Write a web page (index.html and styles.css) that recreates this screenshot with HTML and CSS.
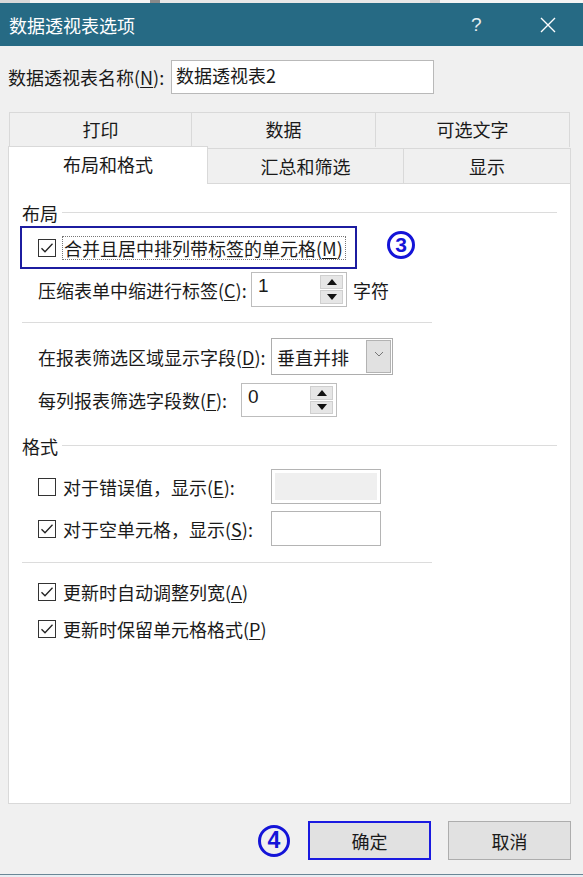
FILE: index.html
```html
<!DOCTYPE html>
<html lang="zh-CN">
<head>
<meta charset="utf-8">
<title>数据透视表选项</title>
<link rel="stylesheet" href="styles.css">
</head>
<body>
<div class="page">
  <div class="topstrip"></div>
  <div class="titlebar">
    <span class="title">数据透视表选项</span>
    <span class="help">?</span>
    <svg class="close" width="16" height="16" viewBox="0 0 16 16"><path d="M1 1L15 15M15 1L1 15" stroke="#fff" stroke-width="1.4" fill="none"/></svg>
  </div>

  <div class="namerow">
    <span class="lbl">数据透视表名称(<u>N</u>):</span>
    <div class="namebox">数据透视表2</div>
  </div>

  <div class="tabs">
    <div class="tabrow row1">
      <div class="tab t-print">打印</div>
      <div class="tab t-data">数据</div>
      <div class="tab t-alt">可选文字</div>
    </div>
    <div class="tabrow row2">
      <div class="tab t-layout active">布局和格式</div>
      <div class="tab t-sum">汇总和筛选</div>
      <div class="tab t-show">显示</div>
    </div>
  </div>

  <div class="panel">
    <div class="group"><span>布局</span><i></i></div>

    <div class="hlrow">
      <div class="hlbox">
        <span class="cb checked"><svg width="16" height="16" viewBox="0 0 16 16"><path d="M2.5 8.2L6 11.8L13.5 3.8" stroke="#222" stroke-width="1.3" fill="none"/></svg></span>
        <span class="focus">合并且居中排列带标签的单元格(<u>M</u>)</span>
      </div>
      <span class="circ c3">3</span>
    </div>

    <div class="row r-indent">
      <span class="lbl">压缩表单中缩进行标签(<u>C</u>):</span>
      <div class="spin s1"><span class="val">1</span>
        <div class="arrows"><b class="up"></b><b class="down"></b></div>
      </div>
      <span class="lbl unit">字符</span>
    </div>

    <div class="sep"></div>

    <div class="row r-dd">
      <span class="lbl">在报表筛选区域显示字段(<u>D</u>):</span>
      <div class="dd"><span class="val">垂直并排</span>
        <span class="ddbtn"><svg width="10" height="6" viewBox="0 0 10 6"><path d="M1 1L5 5L9 1" stroke="#777" stroke-width="1" fill="none"/></svg></span>
      </div>
    </div>

    <div class="row r-cnt">
      <span class="lbl">每列报表筛选字段数(<u>F</u>):</span>
      <div class="spin s2"><span class="val">0</span>
        <div class="arrows"><b class="up"></b><b class="down"></b></div>
      </div>
    </div>

    <div class="group g2"><span>格式</span><i></i></div>

    <div class="row r-err">
      <span class="cb"></span>
      <span class="lbl ltxt">对于错误值，显示(<u>E</u>):</span>
      <div class="fbox disabled"><div class="inner"></div></div>
    </div>

    <div class="row r-empty">
      <span class="cb checked"><svg width="16" height="16" viewBox="0 0 16 16"><path d="M2.5 8.2L6 11.8L13.5 3.8" stroke="#222" stroke-width="1.3" fill="none"/></svg></span>
      <span class="lbl ltxt">对于空单元格，显示(<u>S</u>):</span>
      <div class="fbox"></div>
    </div>

    <div class="sep sep2"></div>

    <div class="row r-chk1">
      <span class="cb checked"><svg width="16" height="16" viewBox="0 0 16 16"><path d="M2.5 8.2L6 11.8L13.5 3.8" stroke="#222" stroke-width="1.3" fill="none"/></svg></span>
      <span class="lbl ltxt">更新时自动调整列宽(<u>A</u>)</span>
    </div>

    <div class="row r-chk2">
      <span class="cb checked"><svg width="16" height="16" viewBox="0 0 16 16"><path d="M2.5 8.2L6 11.8L13.5 3.8" stroke="#222" stroke-width="1.3" fill="none"/></svg></span>
      <span class="lbl ltxt">更新时保留单元格格式(<u>P</u>)</span>
    </div>
  </div>

  <div class="buttons">
    <span class="circ c4">4</span>
    <div class="btn ok">确定</div>
    <div class="btn cancel">取消</div>
  </div>

  <div class="bottomstrip"></div>
</div>
</body>
</html>
```

FILE: styles.css
```css
* { box-sizing: border-box; }
html, body { margin: 0; padding: 0; }
body {
  background: #f0f0f0;
  font-family: "Noto Sans CJK SC", "Noto Sans", sans-serif;
  font-size: 18px;
  color: #1a1a1a;
}
u { text-decoration: underline; text-underline-offset: 2px; text-decoration-thickness: 1px; }

.page {
  width: 583px;
  height: 877px;
  display: flex;
  flex-direction: column;
  overflow: hidden;
}

.topstrip {
  height: 3px;
  background: linear-gradient(90deg, #d8d8d8 0 30px, #f4f4f4 30px 150px, #8a8a8a 150px 160px, #e8e8e8 160px 430px, #cfcfcf 430px 440px, #f4f4f4 440px);
}

.titlebar {
  height: 43px;
  background: #266a84;
  display: flex;
  align-items: center;
  color: #fff;
  padding-left: 9px;
}
.title { font-size: 18px; line-height: 24px; flex: 1; }
.help { font-family: "Liberation Sans", sans-serif; font-size: 19px; width: 14px; margin-right: 55px; color: #e8eef1; }
.close { margin-right: 27px; }

.namerow {
  margin-top: 14px;
  height: 34px;
  display: flex;
  align-items: center;
  padding-left: 8px;
}
.lbl { line-height: 24px; white-space: nowrap; }
.namerow .lbl { width: 163px; }
.namebox {
  width: 263px;
  height: 34px;
  background: #fff;
  border: 1px solid #b9b9b9;
  padding-left: 4px;
  line-height: 28px;
}

.tabs { margin-top: 18px; margin-left: 8px; width: 563px; }
.tabrow { display: flex; }
.row1 { height: 35px; padding-left: 1px; padding-right: 1px; }
.row2 { height: 36px; align-items: flex-end; }
.tab {
  background: #f0f0f0;
  border: 1px solid #d9d9d9;
  border-bottom: none;
  display: flex;
  align-items: center;
  justify-content: center;
  line-height: 24px;
}
.row1 .tab { height: 35px; padding-bottom: 2px; }
.row1 .tab + .tab { border-left: none; }
.t-print { width: 183px; }
.t-data { width: 184px; }
.t-alt { width: 194px; }
.row2 .tab { height: 35px; border-top-color: #d9d9d9; }
.t-layout { width: 200px; }
.t-sum { width: 196px; border-left: none; }
.t-show { width: 167px; border-left: none; }
.tab.active {
  background: #fff;
  height: 38px;
  border-color: #d9d9d9;
  position: relative;
  z-index: 1;
  margin-bottom: -1px;
  padding-bottom: 3px;
}

.panel {
  margin-left: 8px;
  width: 563px;
  height: 621px;
  background: #fff;
  border: 1px solid #d9d9d9;
  display: flex;
  flex-direction: column;
  padding-left: 13px;
  padding-top: 17px;
}

.group {
  display: flex;
  align-items: center;
  height: 24px;
  width: 535px;
}
.group span { line-height: 24px; }
.group i { flex: 1; height: 1px; background: #dcdcdc; margin-left: 4px; margin-top: -2px; }
.g2 { margin-top: 17px; }

.hlrow { display: flex; align-items: center; margin-top: 1px; margin-left: -2px; }
.hlbox {
  width: 337px;
  height: 43px;
  border: 2px solid #1c1ca0;
  display: flex;
  align-items: center;
  padding-left: 16px;
}
.focus {
  border: 1px dotted #777;
  line-height: 22px;
  padding: 0 2px 0 1px;
  margin-left: 6px;
}

.cb {
  width: 18px;
  height: 18px;
  border: 1px solid #333;
  background: #fff;
  display: inline-flex;
  align-items: center;
  justify-content: center;
  flex: none;
}

.circ {
  display: inline-flex;
  align-items: center;
  justify-content: center;
  border: 3px solid #1414d8;
  border-radius: 50%;
  color: #1414d8;
  font-family: "Liberation Sans", sans-serif;
  font-weight: bold;
}
.c3 { width: 28px; height: 28px; font-size: 21px; margin-left: 30px; margin-top: -6px; }
.c4 { width: 32px; height: 32px; font-size: 23px; margin-right: 18px; }

.row { display: flex; align-items: center; padding-left: 16px; }
.r-indent { height: 35px; margin-top: 3px; }
.r-indent .lbl { width: 213px; }
.spin {
  height: 35px;
  width: 96px;
  border: 1px solid #bdbdbd;
  background: #fff;
  display: flex;
  justify-content: space-between;
  padding: 2px 3px 2px 6px;
}
.spin .val { font-family: "Liberation Sans", sans-serif; font-size: 19px; line-height: 22px; }
.arrows { display: flex; flex-direction: column; width: 23px; gap: 1px; }
.arrows b {
  flex: 1;
  background: #e6e6e6;
  border: 1px solid #cfcfcf;
  position: relative;
}
.arrows b::after {
  content: "";
  position: absolute;
  left: 50%;
  top: 50%;
  transform: translate(-50%, -50%);
  border-left: 5px solid transparent;
  border-right: 5px solid transparent;
}
.arrows .up::after { border-bottom: 6px solid #111; }
.arrows .down::after { border-top: 6px solid #111; }
.unit { margin-left: 6px; }

.sep { height: 1px; width: 410px; background: #dcdcdc; margin-top: 15px; }
.sep2 { margin-top: 16px; }

.r-dd { height: 37px; margin-top: 15px; }
.r-dd .lbl { width: 233px; }
.dd {
  width: 122px;
  height: 37px;
  border: 1px solid #adadad;
  background: #fff;
  display: flex;
  justify-content: space-between;
  padding: 1px 1px 1px 5px;
}
.dd .val { line-height: 34px; }
.ddbtn {
  width: 25px;
  background: #e1e1e1;
  border: 1px solid #b3b3b3;
  display: flex;
  align-items: center;
  justify-content: center;
  padding-bottom: 6px;
}

.r-cnt { height: 34px; margin-top: 8px; }
.r-cnt .lbl { width: 203px; }
.s2 { height: 34px; }

.ltxt { margin-left: 7px; }
.r-err { height: 35px; margin-top: 11px; }
.r-err .ltxt { width: 208px; }
.r-empty { height: 35px; margin-top: 7px; }
.r-empty .ltxt { width: 208px; }
.fbox {
  width: 110px;
  height: 35px;
  border: 1px solid #b4b4b4;
  background: #fff;
  padding: 3px;
}
.fbox .inner { width: 100%; height: 100%; background: #efefef; }

.r-chk1 { height: 30px; margin-top: 14px; }
.r-chk2 { height: 30px; margin-top: 7px; }

.buttons {
  margin-top: 17px;
  height: 39px;
  display: flex;
  align-items: center;
  justify-content: flex-end;
  padding-right: 12px;
}
.btn {
  width: 123px;
  height: 39px;
  background: #e1e1e1;
  display: flex;
  align-items: center;
  justify-content: center;
  line-height: 24px;
}
.ok { border: 2px solid #1a1ae0; }
.cancel { border: 1px solid #adadad; margin-left: 17px; }

.bottomstrip {
  margin-top: auto;
  height: 3px;
  background: #e8eef3;
  border-top: 1px solid #6a8796;
}
```
